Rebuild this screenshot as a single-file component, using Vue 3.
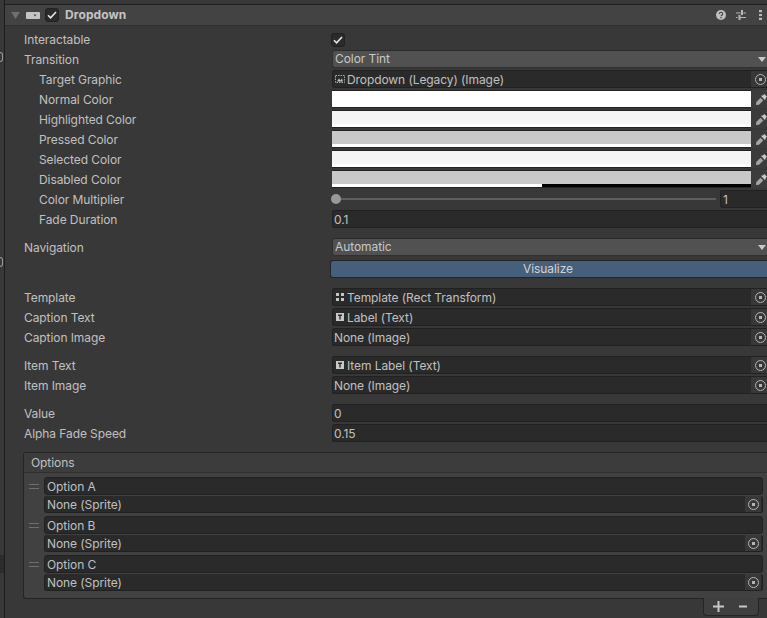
<script setup>
const tintRows = [
  { label: 'Normal Color', fill: '#ffffff', alpha: 100 },
  { label: 'Highlighted Color', fill: '#f5f5f5', alpha: 100 },
  { label: 'Pressed Color', fill: '#c8c8c8', alpha: 100 },
  { label: 'Selected Color', fill: '#f5f5f5', alpha: 100 },
  { label: 'Disabled Color', fill: '#c8c8c8', alpha: 50 },
]
const refsA = [
  { label: 'Template', icon: 'rect', text: 'Template (Rect Transform)' },
  { label: 'Caption Text', icon: 'text', text: 'Label (Text)' },
  { label: 'Caption Image', icon: '', text: 'None (Image)' },
]
const refsB = [
  { label: 'Item Text', icon: 'text', text: 'Item Label (Text)' },
  { label: 'Item Image', icon: '', text: 'None (Image)' },
]
const options = ['Option A', 'Option B', 'Option C']
</script>

<template>
  <div class="page">
    <aside class="rail">
      <i class="mark m1"></i>
      <i class="mark m2"></i>
      <i class="patch"></i>
    </aside>
    <main class="main">
      <header class="head">
        <svg class="fold" width="9" height="7" viewBox="0 0 9 7"><path d="M0 0h9L4.500 7z" fill="#6f6f6f"/></svg>
        <svg class="script" width="14" height="7" viewBox="0 0 14 7"><path fill="#c4c4c4" d="M1 0h12a1 1 0 0 1 1 1v5a1 1 0 0 1-1 1H1a1 1 0 0 1-1-1V1a1 1 0 0 1 1-1z"/><path fill="#434343" d="M7.500 2.500h3L9 4.500z"/></svg>
        <span class="check small"><svg width="10" height="8" viewBox="0 0 10 8"><path d="M1 4.200 3.600 6.800 9 1" fill="none" stroke="#e6e6e6" stroke-width="1.600"/></svg></span>
        <span class="title">Dropdown</span>
        <svg class="hicon help" width="10" height="10" viewBox="0 0 11 11"><circle cx="5.500" cy="5.500" r="5.500" fill="#c0c0c0"/><path d="M3.700 4.300a1.800 1.700 0 1 1 2.700 1.500c-.6.400-.9.600-.9 1.200" fill="none" stroke="#434343" stroke-width="1.300"/><rect x="4.800" y="7.800" width="1.400" height="1.400" fill="#434343"/></svg>
        <svg class="hicon sliders" width="10" height="10" viewBox="0 0 10 10"><path fill="#b8b8b8" d="M0 2.500h4.500v1H0zM7.500 2.500H10v1H7.500zM5 0h2v5H5zM0 7h1.500v1H0zM4.500 7H10v1H4.500zM2.500 5h2v5h-2z"/></svg>
        <svg class="hicon dots" width="3" height="10" viewBox="0 0 3 10"><path fill="#b8b8b8" d="M0 0h3v2.200H0zM0 3.900h3v2.200H0zM0 7.800h3V10H0z"/></svg>
      </header>

      <section class="props">
        <div class="row first">
          <label class="name">Interactable</label>
          <span class="check"><svg width="10" height="8" viewBox="0 0 10 8"><path d="M1 4.200 3.600 6.800 9 1" fill="none" stroke="#e6e6e6" stroke-width="1.600"/></svg></span>
        </div>
        <div class="row">
          <label class="name">Transition</label>
          <div class="popup">Color Tint<i class="caret"></i></div>
        </div>
        <div class="row sub">
          <label class="name">Target Graphic</label>
          <div class="slot">
            <svg class="oicon img" width="10" height="8" viewBox="0 0 10 8"><path fill="none" stroke="#a8a8a8" d="M.5.500h9v7h-9z" stroke-dasharray="1.500 1"/><path fill="#c8c8c8" d="M2 6.500l2-3 1.500 2L7 3.500l1 3z"/></svg>
            <span>Dropdown (Legacy) (Image)</span>
            <i class="pick"><b></b></i>
          </div>
        </div>
        <div v-for="c in tintRows" :key="c.label" class="row sub">
          <label class="name">{{ c.label }}</label>
          <div class="colour">
            <div class="swatch">
              <div class="tone" :style="{ background: c.fill }"></div>
              <div class="alpha"><div class="alpha-on" :style="{ width: c.alpha + '%' }"></div></div>
            </div>
            <div class="drop-box">
              <svg width="11" height="11" viewBox="0 0 11 11"><path fill="#c8c8c8" d="M8.300 0 11 2.700 9.300 4.400l.5.600-.9.900-3.800-3.800.9-.9.600.5z"/><path fill="#a4a4a4" d="M4.600 3.700 7.300 6.400 3 10.700l-2.700.3L0 10.700.3 8z"/></svg>
            </div>
          </div>
        </div>
        <div class="row sub">
          <label class="name">Color Multiplier</label>
          <div class="slider">
            <div class="track"><i class="thumb"></i></div>
            <div class="field num"><span>1</span></div>
          </div>
        </div>
        <div class="row sub">
          <label class="name">Fade Duration</label>
          <div class="field"><span>0.1</span></div>
        </div>

        <div class="row gap">
          <label class="name">Navigation</label>
          <div class="popup">Automatic<i class="caret"></i></div>
        </div>
        <div class="visual-row"><button class="visual">Visualize</button></div>

        <div class="group">
          <div v-for="r in refsA" :key="r.label" class="row">
            <label class="name">{{ r.label }}</label>
            <div class="slot">
              <svg v-if="r.icon === 'rect'" class="oicon tiny" width="8" height="8" viewBox="0 0 8 8"><path fill="#c4c4c4" d="M0 0h3v3H0zM5 0h3v3H5zM0 5h3v3H0zM5 5h3v3H5z"/></svg>
              <svg v-else-if="r.icon === 'text'" class="oicon tiny" width="8" height="8" viewBox="0 0 8 8"><path fill="#c8c8c8" fill-rule="evenodd" d="M0 0h8v8H0zM2 1.500v1.500h1.300v3.500h1.400V3H6V1.500z"/></svg>
              <span>{{ r.text }}</span>
              <i class="pick"><b></b></i>
            </div>
          </div>
        </div>

        <div class="group">
          <div v-for="r in refsB" :key="r.label" class="row">
            <label class="name">{{ r.label }}</label>
            <div class="slot">
              <svg v-if="r.icon === 'text'" class="oicon tiny" width="8" height="8" viewBox="0 0 8 8"><path fill="#c8c8c8" fill-rule="evenodd" d="M0 0h8v8H0zM2 1.500v1.500h1.300v3.500h1.400V3H6V1.500z"/></svg>
              <span>{{ r.text }}</span>
              <i class="pick"><b></b></i>
            </div>
          </div>
        </div>

        <div class="group last">
          <div class="row">
            <label class="name">Value</label>
            <div class="field"><span>0</span></div>
          </div>
          <div class="row">
            <label class="name">Alpha Fade Speed</label>
            <div class="field"><span>0.15</span></div>
          </div>
        </div>

        <div class="list">
          <div class="list-head">Options</div>
          <div class="list-body">
            <div v-for="o in options" :key="o" class="item">
              <div class="grip"><i></i><i></i></div>
              <div class="item-fields">
                <div class="item-field">{{ o }}</div>
                <div class="item-field lower">None (Sprite)<i class="pick"><b></b></i></div>
              </div>
            </div>
          </div>
        </div>
        <div class="foot-row">
          <div class="foot">
            <svg width="11" height="11" viewBox="0 0 11 11"><path fill="#c8c8c8" d="M4.500 0h2v4.500H11v2H6.500V11h-2V6.500H0v-2h4.500z"/></svg>
            <svg width="8" height="11" viewBox="0 0 8 11"><path fill="#c8c8c8" d="M0 4.500h8v2H0z"/></svg>
          </div>
        </div>
      </section>
    </main>
  </div>
</template>

<style>
html, body { margin: 0; background: #383838; overflow: hidden; }
</style>

<style scoped>
.page {
  width: 767px;
  height: 618px;
  overflow: hidden;
  display: flex;
  background: #383838;
  font-family: Inter, "Noto Sans", sans-serif;
  font-size: 12px;
  letter-spacing: -.08px;
  line-height: 18px;
  color: #c0c0c0;
}
.rail {
  width: 4px;
  flex: none;
  overflow: hidden;
  display: flex;
  flex-direction: column;
}
.mark {
  flex: none;
  width: 3px;
  height: 10px;
  box-sizing: border-box;
  border: 1px solid #9a9a9a;
  border-left: 0;
  border-radius: 0 4px 4px 0;
}
.m1 { margin-top: 52px; }
.m2 { margin-top: 195px; }
.patch { width: 4px; height: 18px; margin-top: 288px; background: #2c2c2c; flex: none; }
.main {
  width: 763px;
  flex: none;
  box-sizing: border-box;
  border-left: 1px solid #1c1c1c;
  padding-top: 4px;
}
.head {
  height: 20px;
  display: flex;
  align-items: center;
  background: #434343;
  border-top: 1px solid #1f1f1f;
  border-bottom: 1px solid #303030;
  position: relative;
}
.fold { margin-left: 6px; }
.script { margin-left: 6px; }
.check {
  width: 14px;
  height: 14px;
  box-sizing: border-box;
  background: #2a2a2a;
  border: 1px solid #212121;
  border-radius: 3px;
  display: flex;
  align-items: center;
  justify-content: center;
}
.row > .check { margin-left: -1px; }
.check.small { margin-left: 5px; }
.title { margin-left: 6px; font-weight: 700; color: #c4c4c4; letter-spacing: .1px; }
.hicon { position: absolute; top: 5px; }
.help { left: 711px; }
.sliders { left: 731px; }
.dots { left: 754px; }
.props { padding-left: 19px; }
.row {
  display: grid;
  grid-template-columns: 308px 1fr;
  align-items: center;
  height: 18px;
  margin-bottom: 2px;
}
.row.first { margin-top: 5px; }
.row.sub .name { padding-left: 15px; }
.row.gap { margin-top: 10px; }
.name { white-space: nowrap; }
.popup, .slot, .field, .colour, .slider { margin-top: -2px; }
.popup {
  height: 18px;
  box-sizing: border-box;
  background: #515151;
  border: 1px solid #303030;
  border-top-color: #2a2a2a;
  border-right: 0;
  border-radius: 3px 0 0 3px;
  padding-left: 2px;
  line-height: 16px;
  color: #c8c8c8;
  position: relative;
}
.caret {
  position: absolute;
  right: 1px;
  top: 6px;
  border-left: 4px solid transparent;
  border-right: 4px solid transparent;
  border-top: 5px solid #c8c8c8;
}
.slot {
  height: 18px;
  box-sizing: border-box;
  background: #2a2a2a;
  border: 1px solid #212121;
  border-right: 0;
  border-radius: 3px 0 0 3px;
  padding: 2px 0 0 1px;
  display: flex;
  align-items: center;
  line-height: 14px;
  position: relative;
}
.oicon { flex: none; margin-top: -2px; }
.oicon.img { margin-left: 1px; margin-right: 2px; }
.oicon.tiny { margin-left: 2px; margin-right: 3px; }
.pick {
  position: absolute;
  right: 0;
  top: 0;
  bottom: 0;
  width: 16px;
  box-sizing: border-box;
  padding-left: 2px;
  background: #383838;
  display: flex;
  align-items: center;
  justify-content: center;
}
.pick b {
  width: 11px;
  height: 11px;
  box-sizing: border-box;
  border: 1px solid #b4b4b4;
  border-radius: 50%;
  background: radial-gradient(circle, #b4b4b4 1.500px, transparent 2px);
}
.colour { display: flex; height: 18px; }
.swatch {
  width: 419px;
  height: 18px;
  box-sizing: border-box;
  border-top: 1px solid #222;
  border-bottom: 1px solid #222;
  background: #000;
  display: flex;
  flex-direction: column;
}
.tone { height: 13px; }
.alpha { height: 3px; background: #000; }
.alpha-on { height: 100%; background: #fff; }
.drop-box {
  width: 16px;
  height: 18px;
  background: #3c3c3c;
  display: flex;
  align-items: center;
  justify-content: flex-end;
}
.slider { display: flex; align-items: center; }
.track {
  width: 380px;
  height: 2px;
  margin-left: 4px;
  background: #5e5e5e;
  position: relative;
}
.thumb {
  position: absolute;
  left: -5px;
  top: -4px;
  width: 10px;
  height: 10px;
  border-radius: 50%;
  background: #999;
}
.field {
  height: 18px;
  box-sizing: border-box;
  background: #2a2a2a;
  border: 1px solid #212121;
  border-right: 0;
  border-radius: 3px 0 0 3px;
  padding: 2px 0 0 1px;
  line-height: 14px;
}
.field.num { width: 47px; margin-left: 4px; margin-top: 0; padding-left: 2px; }
.visual-row { padding-left: 306px; margin-top: 3px; margin-bottom: 11px; }
.visual {
  display: block;
  width: 437px;
  height: 18px;
  padding: 0 2px 0 0;
  background: #46607c;
  border: 1px solid #242424;
  border-right: 0;
  border-radius: 3px 0 0 3px;
  font: inherit;
  letter-spacing: inherit;
  line-height: 16px;
  color: #d2d2d2;
  text-align: center;
}
.group { margin-bottom: 10px; }
.group.last { margin-bottom: 0; }
.list {
  margin: 9px -4px 0 -1px;
  border: 1px solid #242424;
  border-right: 0;
  border-radius: 3px 0 0 3px;
  background: #414141;
}
.list-head {
  height: 19px;
  line-height: 20px;
  padding-left: 7px;
  background: #3c3c3c;
  border-bottom: 1px solid #2f2f2f;
}
.list-body { padding: 4px 8px 7px 5px; }
.item { display: flex; margin-bottom: 3px; }
.item:last-child { margin-bottom: 0; }
.grip { width: 15px; flex: none; padding-top: 7px; }
.grip i { display: block; width: 10px; height: 1px; background: #6e6e6e; margin-bottom: 3px; }
.item-fields { flex: 1; display: flex; flex-direction: column; gap: 1px; }
.item-field {
  height: 18px;
  box-sizing: border-box;
  background: #2a2a2a;
  border: 1px solid #212121;
  border-radius: 3px;
  padding: 0 0 0 2px;
  line-height: 17px;
  position: relative;
}
.item-field.lower { height: 17px; padding-top: 1px; line-height: 16px; border-top-width: 0; }
.item-field .pick { background: #383838; right: 1px; padding-left: 0; }
.foot-row { display: flex; justify-content: flex-end; margin-right: 8px; }
.foot {
  width: 56px;
  height: 18px;
  box-sizing: border-box;
  background: #3f3f3f;
  border: 1px solid #242424;
  border-top: 0;
  border-radius: 0 0 4px 4px;
  display: flex;
  align-items: center;
  gap: 15px;
  padding-left: 9px;
  margin-top: -1px;
}
</style>
